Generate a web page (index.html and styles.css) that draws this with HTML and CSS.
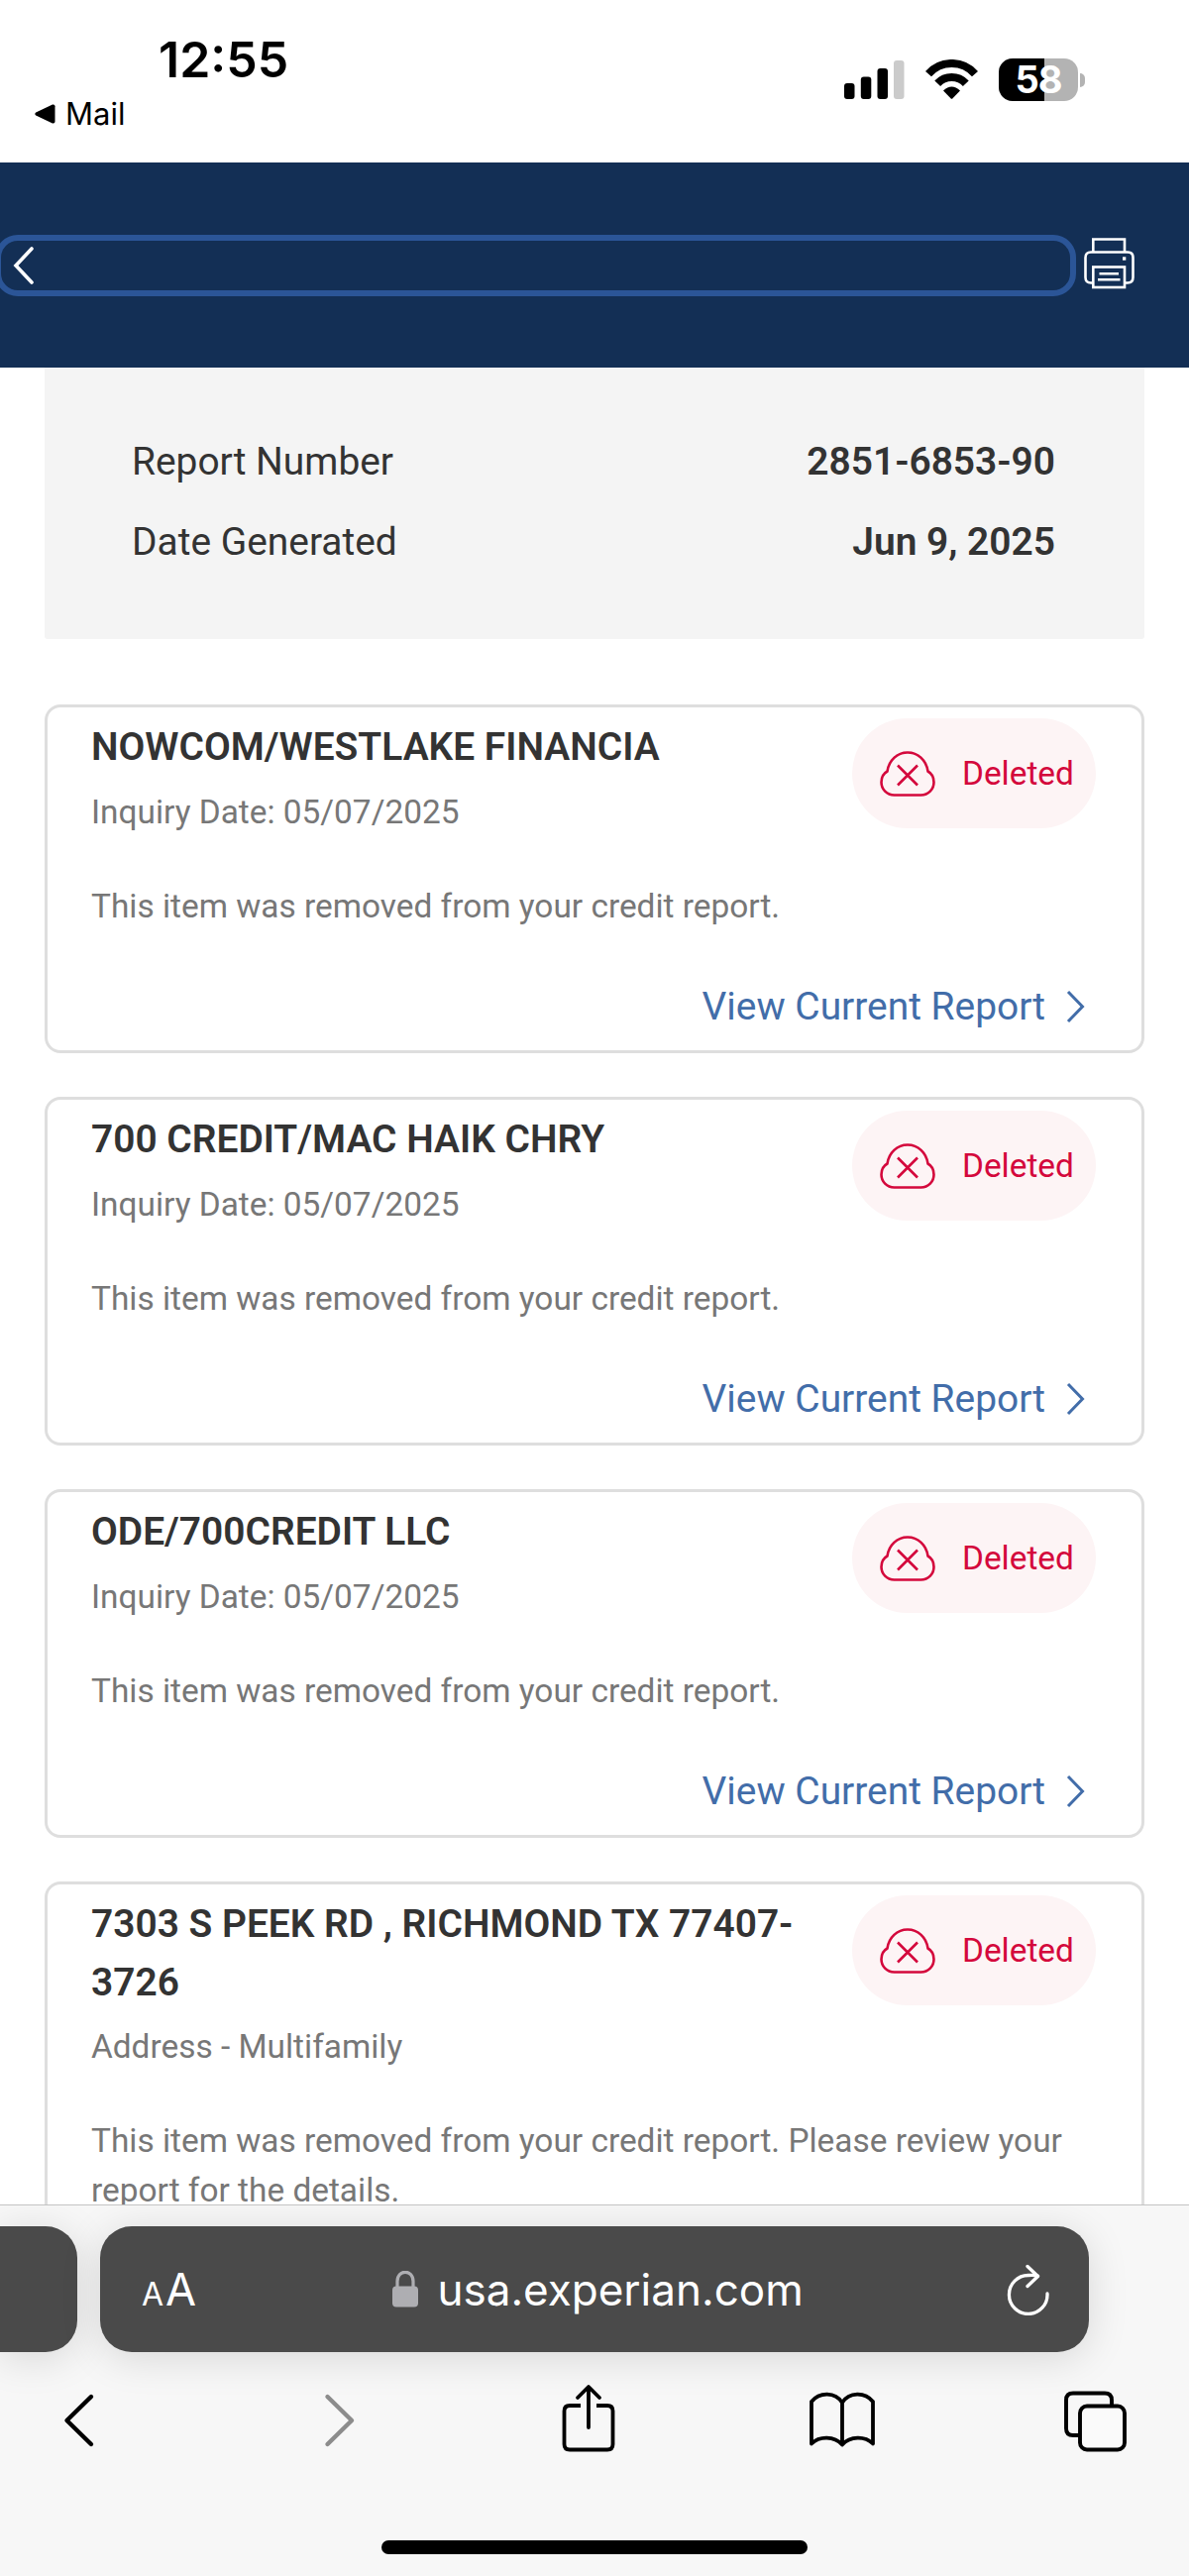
FILE: index.html
```
<!DOCTYPE html>
<html lang="en">
<head>
    <meta charset="UTF-8">
    <meta name="viewport" content="width=device-width, initial-scale=1.0">
    <title>Dispute Results</title>
    <link rel="stylesheet" href="styles.css">
</head>
<body>

<!-- shared icons -->
<svg class="sprite" width="0" height="0">
    <symbol id="icon-deleted" viewBox="0 0 56 46">
        <path d="M14.5 44.5 H41.5 C49 44.5 54.5 38.5 54.5 31.5 C54.5 26.5 52 22.5 48.5 20.5 C47 9.5 38.5 1.5 28 1.5 C17.5 1.5 9 9.5 7.5 20.5 C4 22.5 1.5 26.5 1.5 31.5 C1.5 38.5 7 44.5 14.5 44.5 Z M18 14.5 L38 34.5 M38 14.5 L18 34.5" fill="none" stroke="currentColor" stroke-width="2.6"/>
    </symbol>
    <symbol id="icon-next" viewBox="0 0 20 34">
        <path d="M2 2 L16.5 17 L2 32" fill="none" stroke="currentColor" stroke-width="3"/>
    </symbol>
</svg>

<div class="status-bar">
    <div class="status-left">
        <div class="time">12:55</div>
        <div class="back-app">
            <svg width="21" height="20" viewBox="0 0 21 20"><path d="M1.2 8.6 L18 0.5 Q20.5 0 20.5 2.2 V17.8 Q20.5 20 18 19.5 L1.2 11.4 Q-0.6 10 1.2 8.6 Z"/></svg>
            <span>Mail</span>
        </div>
    </div>
    <div class="status-right">
        <svg width="61" height="40" viewBox="0 0 61 40">
            <rect x="0" y="24" width="10.5" height="16" rx="3"/>
            <rect x="16.8" y="17.5" width="10.5" height="22.5" rx="3"/>
            <rect x="33.5" y="9" width="10.5" height="31" rx="3"/>
            <rect x="50" y="1" width="10.5" height="39" rx="3" fill="#cbcbcb"/>
        </svg>
        <svg width="53" height="40" viewBox="0 0 53 40">
            <path d="M3 14.6 A31.3 31.3 0 0 1 50 14.6" fill="none" stroke="#000" stroke-width="8"/>
            <path d="M12.2 24.3 A19.6 19.6 0 0 1 40.8 24.3" fill="none" stroke="#000" stroke-width="8"/>
            <path d="M18 31.5 Q26.5 23.5 35 31.5 L27.5 39.3 Q26.5 40.3 25.5 39.3 Z"/>
        </svg>
        <div class="battery">
            <div class="battery-body">58</div>
            <div class="battery-cap"></div>
        </div>
    </div>
</div>

<div class="header">
    <div class="header-back">
        <svg width="22" height="40" viewBox="0 0 22 40"><path d="M19 3 L3 20 L19 37" fill="none" stroke="#fff" stroke-width="3.6" stroke-linecap="round"/></svg>
    </div>
    <svg class="print" width="51" height="52" viewBox="0 0 51 52" fill="none" stroke="#fff" stroke-width="2.6">
        <path d="M9.3 14.5 V1.5 H41 V14.5"/>
        <path d="M9.3 45.5 H7 Q1.5 45.5 1.5 40 V20 Q1.5 14.5 7 14.5 H44 Q49.5 14.5 49.5 20 V40 Q49.5 45.5 44 45.5 H41"/>
        <rect x="9.3" y="29.5" width="31.7" height="20.5"/>
        <path d="M15.5 36.3 H35 M14 42.2 H36.5"/>
        <path d="M39 21 H42.3" stroke-width="3.4"/>
    </svg>
</div>

<div class="content">
    <div class="report-info">
        <div class="info-row"><span>Report Number</span><b>2851-6853-90</b></div>
        <div class="info-row"><span>Date Generated</span><b>Jun 9, 2025</b></div>
    </div>

    <div class="card">
        <div class="card-top">
            <div class="card-heading">
                <h2>NOWCOM/WESTLAKE FINANCIA</h2>
                <p class="sub">Inquiry Date: 05/07/2025</p>
            </div>
            <div class="badge"><svg width="56" height="46"><use href="#icon-deleted"/></svg><span>Deleted</span></div>
        </div>
        <p class="desc">This item was removed from your credit report.</p>
        <a class="link"><span>View Current Report</span><svg width="20" height="34"><use href="#icon-next"/></svg></a>
    </div>

    <div class="card">
        <div class="card-top">
            <div class="card-heading">
                <h2>700 CREDIT/MAC HAIK CHRY</h2>
                <p class="sub">Inquiry Date: 05/07/2025</p>
            </div>
            <div class="badge"><svg width="56" height="46"><use href="#icon-deleted"/></svg><span>Deleted</span></div>
        </div>
        <p class="desc">This item was removed from your credit report.</p>
        <a class="link"><span>View Current Report</span><svg width="20" height="34"><use href="#icon-next"/></svg></a>
    </div>

    <div class="card">
        <div class="card-top">
            <div class="card-heading">
                <h2>ODE/700CREDIT LLC</h2>
                <p class="sub">Inquiry Date: 05/07/2025</p>
            </div>
            <div class="badge"><svg width="56" height="46"><use href="#icon-deleted"/></svg><span>Deleted</span></div>
        </div>
        <p class="desc">This item was removed from your credit report.</p>
        <a class="link"><span>View Current Report</span><svg width="20" height="34"><use href="#icon-next"/></svg></a>
    </div>

    <div class="card">
        <div class="card-top">
            <div class="card-heading">
                <h2>7303 S PEEK RD , RICHMOND TX 77407-<br>3726</h2>
                <p class="sub">Address - Multifamily</p>
            </div>
            <div class="badge"><svg width="56" height="46"><use href="#icon-deleted"/></svg><span>Deleted</span></div>
        </div>
        <p class="desc">This item was removed from your credit report. Please review your<br>report for the details.</p>
    </div>
</div>

<div class="browser-bar">
    <div class="tabs">
        <div class="tab-prev"></div>
        <div class="tab">
            <div class="text-size"><small>A</small><span>A</span></div>
            <div class="address">
                <svg width="26" height="37" viewBox="0 0 26 37">
                    <path d="M5 17 V10.5 C5 -1.8 21 -1.8 21 10.5 V17" fill="none" stroke="#aeaeb2" stroke-width="3.2"/>
                    <rect x="0" y="15.5" width="26" height="21" rx="4" fill="#aeaeb2"/>
                </svg>
                <span>usa.experian.com</span>
            </div>
            <svg class="reload" width="44" height="52" viewBox="0 0 44 52" fill="none" stroke="#fff" stroke-width="3.3" stroke-linecap="round" stroke-linejoin="round">
                <path d="M41 30 A19.3 19.5 0 1 1 22 11.5 Q27 11 31.5 12"/>
                <path d="M21 2.5 L31.5 12.5 L21 22.5"/>
            </svg>
        </div>
    </div>
    <div class="toolbar">
        <svg width="70" height="70" viewBox="0 0 70 70" fill="none" stroke="#000" stroke-width="4.4" stroke-linecap="round" stroke-linejoin="round"><path d="M47 13 L22.5 37 L47 61"/></svg>
        <svg width="70" height="70" viewBox="0 0 70 70" fill="none" stroke="#8c8c8c" stroke-width="4.4" stroke-linecap="round" stroke-linejoin="round"><path d="M29.5 13 L54 37 L29.5 61"/></svg>
        <svg width="70" height="70" viewBox="0 0 70 70" fill="none" stroke="#000" stroke-width="3.8" stroke-linecap="round" stroke-linejoin="round">
            <path d="M28 22 H17 Q11.5 22 11.5 27.5 V61 Q11.5 66.5 17 66.5 H55 Q60.5 66.5 60.5 61 V27.5 Q60.5 22 55 22 H44" stroke-linecap="butt"/>
            <path d="M36 44 V3.5 M25 14 L36 3 L47 14"/>
        </svg>
        <svg width="70" height="70" viewBox="0 0 70 70" fill="none" stroke="#000" stroke-width="3.8" stroke-linejoin="round">
            <path d="M36 19 C29 8 13 8 5 18 V60.5 C13 52.5 28 52.5 36 61.5 C44 52.5 59 52.5 67 60.5 V18 C59 8 43 8 36 19 Z M36 19 V61.5"/>
        </svg>
        <svg width="70" height="70" viewBox="0 0 70 70" fill="none" stroke="#000" stroke-width="3.9">
            <path d="M20 52 H13 Q6 52 6 45 V16.5 Q6 9.5 13 9.5 H45 Q52 9.5 52 16.5 V22"/>
            <rect x="20" y="22.5" width="45" height="44" rx="7" fill="#fafafa"/>
        </svg>
    </div>
    <div class="home-indicator"></div>
</div>

</body>
</html>
```
FILE: styles.css
```
* {
    box-sizing: border-box;
}
body {
    margin: 0;
    width: 1200px;
    height: 2600px;
    overflow: hidden;
    display: flex;
    flex-direction: column;
    background-color: #fff;
    font-family: Roboto, sans-serif;
    color: #333;
}
svg {
    display: block;
    flex-shrink: 0;
}
.sprite {
    position: absolute;
}

/* phone status bar */
.status-bar {
    height: 164px;
    flex-shrink: 0;
    display: flex;
    justify-content: space-between;
    padding: 30px 105px 0 35px;
    font-family: Inter, sans-serif;
    color: #000;
}
.time {
    padding-left: 125px;
    font-size: 50px;
    font-weight: 600;
    line-height: 61px;
}
.back-app {
    display: flex;
    align-items: center;
    gap: 10px;
    margin-top: 5px;
    font-size: 31px;
    line-height: 38px;
}
.status-right {
    display: flex;
    align-items: flex-start;
    padding-top: 30px;
}
.status-right svg {
    margin-right: 21px;
}
.battery {
    display: flex;
    align-items: center;
    gap: 2px;
    margin-top: -1px;
}
.battery-body {
    width: 80px;
    height: 43px;
    border-radius: 14px;
    background: linear-gradient(to right, #000 46px, #b3b3b3 46px);
    color: #fff;
    font-size: 38px;
    font-weight: 700;
    line-height: 43px;
    letter-spacing: -1px;
    text-align: center;
}
.battery-cap {
    width: 5px;
    height: 14px;
    border-radius: 0 5px 5px 0;
    background-color: #b3b3b3;
}

/* page header */
.header {
    height: 207px;
    flex-shrink: 0;
    display: flex;
    align-items: center;
    background-color: #132f55;
}
.header-back {
    width: 1091px;
    height: 62px;
    margin-left: -5px;
    margin-right: 8px;
    padding-left: 12px;
    display: flex;
    align-items: center;
    border: 6px solid #2b5597;
    border-radius: 23px;
}
.print {
    margin-top: -3px;
}

.content {
    flex: 1;
    min-height: 0;
    overflow: hidden;
    padding: 0 45px;
}
.report-info {
    height: 274px;
    margin-bottom: 66px;
    padding: 66px 90px 0 88px;
    background-color: #f4f4f4;
    border-radius: 0 0 3px 3px;
}
.info-row {
    display: flex;
    justify-content: space-between;
    margin-bottom: 22px;
    font-size: 38.9px;
    line-height: 58.5px;
}
.info-row b {
    font-weight: 600;
}

/* result cards */
.card {
    min-height: 352px;
    margin-bottom: 44px;
    padding: 11px 47px 0 44px;
    border: 3px solid #dedede;
    border-radius: 16px;
}
.card-top {
    display: flex;
    justify-content: space-between;
    align-items: flex-start;
}
h2 {
    margin: 0 0 11px;
    font-size: 38.9px;
    font-weight: 600;
    line-height: 58.5px;
    white-space: nowrap;
}
.sub,
.desc {
    margin: 0;
    font-size: 33.4px;
    line-height: 50px;
    color: #777;
}
.desc {
    margin-top: 45px;
    white-space: nowrap;
}
.badge {
    width: 246px;
    height: 111px;
    margin-right: -1px;
    padding-left: 28px;
    display: flex;
    align-items: center;
    gap: 27px;
    border-radius: 56px;
    background-color: #fdf4f5;
    color: #d4083c;
    font-size: 33.4px;
}
.link {
    display: flex;
    justify-content: flex-end;
    align-items: center;
    gap: 21px;
    margin-top: 47px;
    padding-right: 9px;
    font-size: 38.9px;
    line-height: 58.5px;
    color: #426da9;
}

/* browser controls */
.browser-bar {
    height: 375px;
    flex-shrink: 0;
    overflow: hidden;
    border-top: 1px solid #c4c4c4;
    background-color: #f7f7f7;
    font-family: Inter, sans-serif;
}
.tabs {
    display: flex;
    gap: 23px;
    margin-top: 21px;
}
.tab-prev,
.tab {
    height: 127px;
    background-color: #4a4a4a;
    box-shadow: 0 6px 40px rgba(0, 0, 0, 0.13);
}
.tab-prev {
    width: 78px;
    border-radius: 0 32px 32px 0;
}
.tab {
    width: 998px;
    display: flex;
    align-items: center;
    justify-content: space-between;
    padding: 0 39px 0 42px;
    border-radius: 32px;
    color: #fff;
}
.text-size {
    display: flex;
    align-items: baseline;
    gap: 2px;
    font-size: 45px;
}
.text-size small {
    font-size: 32px;
}
.address {
    display: flex;
    align-items: center;
    gap: 19px;
    margin-left: -7px;
    font-size: 44px;
}
.toolbar {
    display: flex;
    justify-content: space-between;
    padding: 32px 60px 0 45px;
}
.home-indicator {
    width: 430px;
    height: 14px;
    margin: 88px auto 0;
    border-radius: 7px;
    background-color: #000;
}
```
